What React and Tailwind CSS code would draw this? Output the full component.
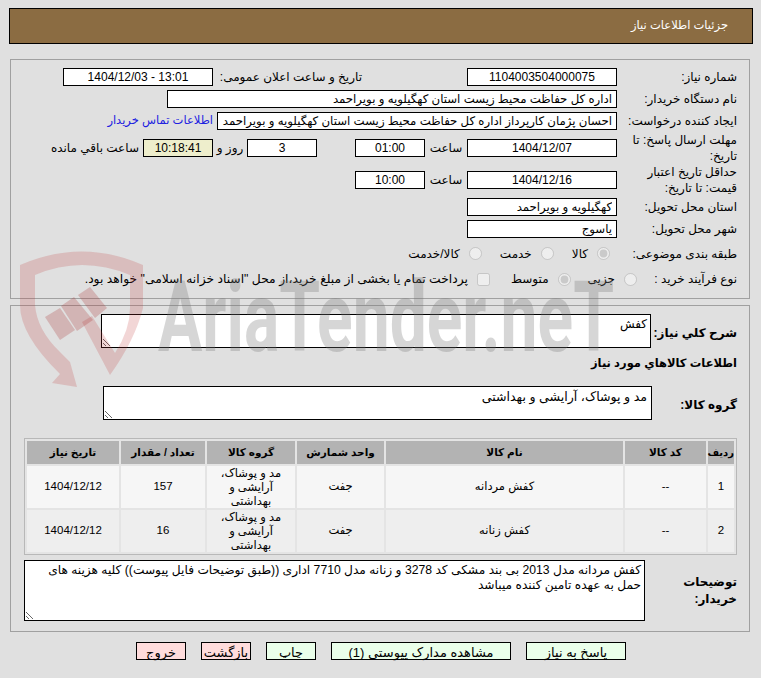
function Field({ value, width, center, bg = 'bg-white' }) {
  return (
    <input
      readOnly
      value={value}
      className={`h-[18px] border border-black px-1 text-black outline-none ${bg} ${width} ${center ? 'text-center text-[12px]' : 'text-right text-[11.75px]'}`}
    />
  );
}

function Row({ label, labelWidth = 'w-[120px]', height, children }) {
  return (
    <div className={`flex items-center ${height}`}>
      <div className={`${labelWidth} shrink-0 leading-[16px]`}>{label}</div>
      {children}
    </div>
  );
}

function Radio({ checked }) {
  return <input type="radio" disabled checked={checked} readOnly className="m-0 shrink-0" />;
}

const products = [
  { id: 1, name: 'کفش مردانه', qty: 157 },
  { id: 2, name: 'کفش زنانه', qty: 16 },
];

function Watermark() {
  return (
    <svg className="pointer-events-none absolute top-0 left-0" width="761" height="678" viewBox="0 0 761 678">
      <path
        d="M20 265 Q82 238 143 265 V308 Q135 340 110 375 L82 322 L92 316 L115 353 Q130 330 130 308 V275 Q82 255 35 275 V305 Q37 330 60 352 L70 362 L77 387 L52 383 L60 374 Q20 335 20 305 Z"
        fill="#c03030"
        fillOpacity="0.2"
      />
      <path d="M45 317 L60 308 L75 330 L60 340 Z" fill="#a83030" fillOpacity="0.25" />
      <path d="M61 306 L74 297 L93 320 L77 331 Z" fill="#a83030" fillOpacity="0.25" />
      <path d="M78 295 L90 287 L107 308 L95 318 Z" fill="#a83030" fillOpacity="0.25" />
      <text
        x="158"
        y="351"
        direction="ltr"
        textLength="456"
        lengthAdjust="spacingAndGlyphs"
        fontFamily="Roboto, sans-serif"
        fontWeight="700"
        fontSize="98"
        fill="#777777"
        fillOpacity="0.3"
      >
        AriaTender.neT
      </text>
    </svg>
  );
}

export default function App() {
  return (
    <div
      dir="rtl"
      className="relative h-[678px] w-[761px] overflow-hidden bg-[#e0e0e0] pt-2 font-['Liberation_Sans','DejaVu_Sans',sans-serif] text-[12px] text-black"
    >
      {/* Header */}
      <div className="mr-2 ml-[9px] flex h-9 items-center border border-black bg-[#8b6c42] pr-6 text-[11.5px] text-white">
        جزئیات اطلاعات نیاز
      </div>

      {/* Main info */}
      <div className="mt-[15px] mr-[11px] ml-[10px] h-[240px] border border-[#a0a0a0] pt-[6px] pr-3">
        <Row label="شماره نیاز:" height="h-[22px]">
          <Field value="1104003504000075" width="w-[150px]" center />
          <div className="mr-[105px] w-[149px] shrink-0">تاریخ و ساعت اعلان عمومی:</div>
          <Field value="13:01 - 1404/12/03" width="w-[150px]" center />
        </Row>
        <Row label="نام دستگاه خریدار:" height="h-[22px]">
          <Field value="اداره کل حفاظت محیط زیست استان کهگیلویه و بویراحمد" width="w-[450px]" />
        </Row>
        <Row label="ایجاد کننده درخواست:" height="h-[22px]">
          <Field value="احسان پژمان کارپرداز اداره کل حفاظت محیط زیست استان کهگیلویه و بویراحمد" width="w-[400px]" />
          <a className="mr-1 text-[11.5px] text-[#2020e0]">اطلاعات تماس خریدار</a>
        </Row>
        <Row label="مهلت ارسال پاسخ: تا تاریخ:" height="h-[32px]">
          <Field value="1404/12/07" width="w-[150px]" center />
          <div className="w-[42px] text-center">ساعت</div>
          <Field value="01:00" width="w-[70px]" center />
          <div className="w-[38px]" />
          <Field value="3" width="w-[70px]" center />
          <div className="w-[34px] text-center">روز و</div>
          <Field value="10:18:41" width="w-[70px]" bg="bg-[#eeeecc]" center />
          <div className="mr-1">ساعت باقي مانده</div>
        </Row>
        <Row label="حداقل تاریخ اعتبار قیمت: تا تاریخ:" height="h-[32px]">
          <Field value="1404/12/16" width="w-[150px]" center />
          <div className="w-[42px] text-center">ساعت</div>
          <Field value="10:00" width="w-[70px]" center />
        </Row>
        <Row label="استان محل تحویل:" height="h-[22px]">
          <Field value="کهگیلویه و بویراحمد" width="w-[150px]" />
        </Row>
        <Row label="شهر محل تحویل:" height="h-[22px]">
          <Field value="یاسوج" width="w-[150px]" />
        </Row>
        <Row label="طبقه بندی موضوعی:" height="h-[27px]">
          <div className="mr-[7px] flex items-center">
            <Radio checked />
            <span className="mr-[9px] ml-[18px]">کالا</span>
            <Radio />
            <span className="mr-[9px] ml-[18px]">خدمت</span>
            <Radio />
            <span className="mr-[9px]">کالا/خدمت</span>
          </div>
        </Row>
        <Row label="نوع فرآیند خرید :" labelWidth="w-[100px]" height="h-[24px]">
          <div className="flex items-center">
            <Radio />
            <span className="mr-[9px] ml-[17px]">جزیی</span>
            <Radio checked />
            <span className="mr-[9px] ml-[21px]">متوسط</span>
            <input type="checkbox" disabled className="m-0 shrink-0" />
            <span className="mr-[9px] text-[12.3px]">پرداخت تمام یا بخشی از مبلغ خرید،از محل "اسناد خزانه اسلامی" خواهد بود.</span>
          </div>
        </Row>
      </div>

      {/* Items */}
      <div className="mt-[6px] mr-[11px] ml-[10px] h-[327px] border border-[#a0a0a0] pt-2 pr-3">
        <div className="flex h-[34px] items-center">
          <div className="w-[86px] pt-[3px] font-bold">شرح کلي نياز:</div>
          <textarea readOnly value="کفش" className="h-[34px] w-[550px] resize border border-black bg-white px-[3px] text-[12px] outline-none" />
        </div>
        <div className="mt-[6px] h-[24px] text-[11.5px] leading-[18px] font-bold">اطلاعات کالاهاي مورد نياز</div>
        <div className="mt-[8px] flex h-[34px] items-center">
          <div className="w-[85px] pt-[3px] font-bold">گروه کالا:</div>
          <textarea readOnly value="مد و پوشاک، آرایشی و بهداشتی" className="h-[34px] w-[549px] resize border border-black bg-white px-1 pt-px text-[12.6px] outline-none" />
        </div>

        <table className="mt-[18px] w-[713px] table-fixed border-separate border-spacing-[2px] border border-[#b8b8b8] bg-[#e4e4e4] text-center text-[11.5px]">
          <colgroup>
            <col className="w-[26px]" />
            <col className="w-[81px]" />
            <col className="w-[237px]" />
            <col className="w-[87px]" />
            <col className="w-[88px]" />
            <col className="w-[84px]" />
            <col />
          </colgroup>
          <thead>
            <tr className="h-[23px] bg-[#b3b3b3] text-[10.5px] font-bold">
              <th className="p-0 text-[10px]">ردیف</th>
              <th className="p-0">کد کالا</th>
              <th className="p-0">نام کالا</th>
              <th className="p-0">واحد شمارش</th>
              <th className="p-0">گروه کالا</th>
              <th className="p-0">تعداد / مقدار</th>
              <th className="p-0">تاریخ نیاز</th>
            </tr>
          </thead>
          <tbody>
            {products.map((p, i) => (
              <tr key={p.id} className={`h-[41px] ${i === 0 ? 'bg-[#f6f6f6]' : 'bg-[#eeeeee]'}`}>
                <td className="p-0">{p.id}</td>
                <td className="p-0">--</td>
                <td className="p-0">{p.name}</td>
                <td className="p-0">جفت</td>
                <td className="px-3 py-0 leading-[14px]">مد و پوشاک، آرایشی و بهداشتی</td>
                <td className="p-0">{p.qty}</td>
                <td className="p-0">1404/12/12</td>
              </tr>
            ))}
          </tbody>
        </table>

        <div className="mt-[5px] flex items-center">
          <div className="w-[92px] leading-[17px] font-bold">توضیحات خریدار:</div>
          <textarea
            readOnly
            value="کفش مردانه مدل 2013 بی بند مشکی کد 3278 و زنانه مدل 7710 اداری ((طبق توضیحات فایل پیوست)) کلیه هزینه های حمل به عهده تامین کننده میباشد"
            className="h-[61px] w-[621px] resize border border-black bg-white px-[3px] pt-[2px] text-[12.2px] leading-[15px] outline-none"
          />
        </div>
      </div>

      {/* Actions */}
      <div className="mt-[10px] mr-[135px] flex gap-[15px] text-[13px]">
        <button className="h-[18px] w-[100px] border border-black bg-[#eaffea]">پاسخ به نیاز</button>
        <button className="h-[18px] w-[180px] border border-black bg-[#eaffea]">مشاهده مدارک پیوستی (1)</button>
        <button className="h-[18px] w-[50px] border border-black bg-[#eaffea]">چاپ</button>
        <button className="h-[18px] w-[50px] border border-black bg-[#ffdcdc]">بازگشت</button>
        <button className="h-[18px] w-[50px] border border-black bg-[#ffdcdc]">خروج</button>
      </div>

      <Watermark />
    </div>
  );
}
